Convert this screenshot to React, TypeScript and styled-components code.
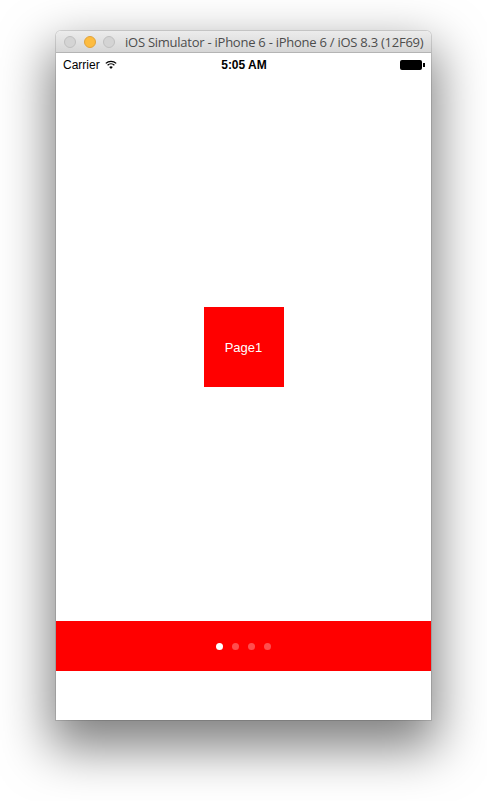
import React from "react";
import styled, { createGlobalStyle } from "styled-components";

const GlobalStyle = createGlobalStyle`
  html, body {
    margin: 0;
    padding: 0;
    background: #ffffff;
  }
  body {
    font-family: "Liberation Sans", Arial, sans-serif;
  }
`;

const Page = styled.div`
  width: 487px;
  height: 801px;
  overflow: hidden;
  padding: 31px 0 0 56px;
  box-sizing: border-box;
`;

const Window = styled.div`
  width: 375px;
  border-radius: 5px 5px 0 0;
  background: #ffffff;
  box-shadow: 0 22px 50px 6px rgba(0, 0, 0, 0.5), 0 0 0 1px rgba(0, 0, 0, 0.12);
  display: flex;
  flex-direction: column;
`;

const TitleBar = styled.div`
  height: 22px;
  border-radius: 5px 5px 0 0;
  background: linear-gradient(#ececec, #d6d6d6);
  border-bottom: 1px solid #b4b4b4;
  box-sizing: border-box;
  display: flex;
  align-items: center;
  padding-left: 8px;
`;

const Lights = styled.div`
  display: flex;
  gap: 7.5px;
`;

const Light = styled.span<{ $color: string; $edge: string }>`
  width: 12px;
  height: 12px;
  border-radius: 50%;
  box-sizing: border-box;
  background: ${(p) => p.$color};
  border: 1px solid ${(p) => p.$edge};
`;

const Title = styled.div`
  margin-left: 10px;
  font-family: "Open Sans", "Liberation Sans", sans-serif;
  font-size: 13px;
  letter-spacing: -0.25px;
  color: #4d4d4d;
  white-space: nowrap;
`;

const Screen = styled.div`
  height: 667px;
  display: flex;
  flex-direction: column;
  background: #ffffff;
`;

const StatusBar = styled.div`
  height: 20px;
  box-sizing: border-box;
  padding: 3px 6px 0 7px;
  display: grid;
  grid-template-columns: 1fr auto 1fr;
  align-items: center;
  font-size: 12px;
  color: #000;
`;

const Carrier = styled.div`
  display: flex;
  align-items: center;
  gap: 5px;
`;

const Clock = styled.div`
  font-weight: bold;
`;

const Battery = styled.div`
  justify-self: end;
  display: flex;
  align-items: center;
`;

const BatteryBody = styled.span`
  width: 22px;
  height: 10px;
  border-radius: 2px;
  background: #000;
`;

const BatteryNub = styled.span`
  width: 2px;
  height: 4px;
  margin-left: 1px;
  background: #000;
`;

const Content = styled.div`
  flex: 1;
  display: flex;
  align-items: center;
  justify-content: center;
`;

const Card = styled.div`
  width: 80px;
  height: 80px;
  background: #ff0000;
  color: #ffffff;
  font-size: 13px;
  display: flex;
  align-items: center;
  justify-content: center;
`;

const Pager = styled.div`
  height: 50px;
  background: #ff0000;
  display: flex;
  align-items: center;
  justify-content: center;
  gap: 9px;
`;

const Dot = styled.span<{ $active?: boolean }>`
  width: 7px;
  height: 7px;
  border-radius: 50%;
  background: ${(p) => (p.$active ? "#ffffff" : "rgba(255, 255, 255, 0.3)")};
`;

const Footer = styled.div`
  height: 49px;
  background: #ffffff;
`;

const Wifi = () => (
  <svg width="12" height="9" viewBox="0 0 12 9">
    <path d="M6 9 L4.2 7 A2.6 2.6 0 0 1 7.8 7 Z" fill="#000" />
    <path d="M2.6 5.3 A4.9 4.9 0 0 1 9.4 5.3" stroke="#000" strokeWidth="1.3" fill="none" />
    <path d="M0.8 3.4 A7.5 7.5 0 0 1 11.2 3.4" stroke="#000" strokeWidth="1.3" fill="none" />
  </svg>
);

export default function App() {
  return (
    <Page>
      <GlobalStyle />
      <Window>
        <TitleBar>
          <Lights>
            <Light $color="#d4d4d4" $edge="#c0c0c0" />
            <Light $color="#fdbc40" $edge="#e1a33a" />
            <Light $color="#d4d4d4" $edge="#c0c0c0" />
          </Lights>
          <Title>iOS Simulator - iPhone 6 - iPhone 6 / iOS 8.3 (12F69)</Title>
        </TitleBar>
        <Screen>
          <StatusBar>
            <Carrier>
              Carrier
              <Wifi />
            </Carrier>
            <Clock>5:05 AM</Clock>
            <Battery>
              <BatteryBody />
              <BatteryNub />
            </Battery>
          </StatusBar>
          <Content>
            <Card>Page1</Card>
          </Content>
          <Pager>
            <Dot $active />
            <Dot />
            <Dot />
            <Dot />
          </Pager>
          <Footer />
        </Screen>
      </Window>
    </Page>
  );
}
